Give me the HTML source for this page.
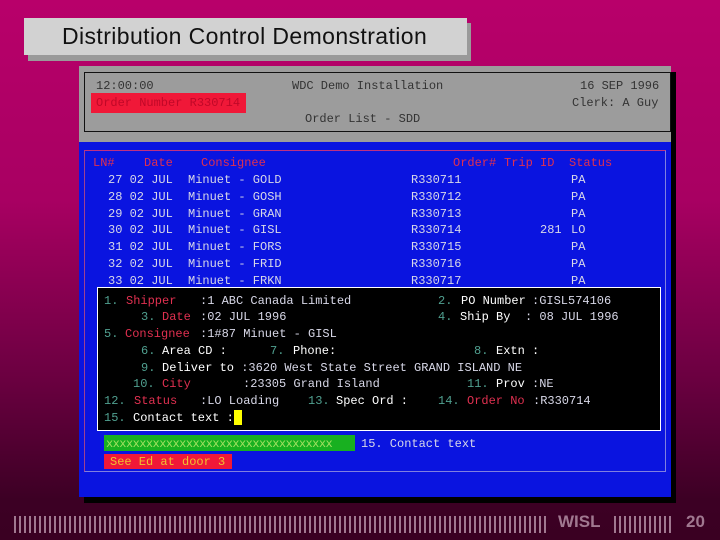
<!DOCTYPE html>
<html><head><meta charset="utf-8"><style>
*{margin:0;padding:0}
body{width:720px;height:540px;overflow:hidden;position:relative;background:linear-gradient(to bottom,#b8006a 0px,#a80062 200px,#6a0040 380px,#3c0024 500px,#3a0022 540px);font-family:"Liberation Mono",monospace}
.a{position:absolute;white-space:pre;font-size:12px;line-height:14px}
.w{color:#d8d8e8}.r{color:#e03050}.g{color:#50a090}.k{color:#333}.W{color:#fff}
</style></head><body>
<div style="position:absolute;left:28px;top:23px;width:443px;height:38px;background:#9a9a9a"></div>
<div style="position:absolute;left:24px;top:18px;width:443px;height:37px;background:#d2d2d2;font-family:'Liberation Sans',sans-serif;font-size:23px;letter-spacing:0.4px;line-height:37px;color:#111;text-indent:38px;white-space:nowrap">Distribution Control Demonstration</div>

<div style="position:absolute;left:84px;top:72px;width:592px;height:431px;background:#000"></div>
<div style="position:absolute;left:79px;top:66px;width:592px;height:76px;background:#9c9c9c"></div>
<div style="position:absolute;left:84px;top:72px;width:585px;height:58px;border:1px solid #111"></div>
<div style="position:absolute;left:79px;top:142px;width:592px;height:355px;background:#0a14e0"></div>
<div style="position:absolute;left:84px;top:150px;width:580px;height:320px;border:1px solid #8080e0;border-top-color:#c03080;border-left-color:#a04090"></div>

<div class="a k" style="left:96px;top:79px">12:00:00</div>
<div class="a k" style="left:292px;top:79px">WDC Demo Installation</div>
<div class="a k" style="left:580px;top:79px">16 SEP 1996</div>
<div style="position:absolute;left:91px;top:93px;width:155px;height:20px;background:#f01838"></div>
<div class="a" style="left:96px;top:96px;color:#c00828">Order Number R330714</div>
<div class="a k" style="left:572px;top:96px">Clerk: A Guy</div>
<div class="a k" style="left:305px;top:112px">Order List - SDD</div>

<div class="a r" style="left:93px;top:156px">LN#</div>
<div class="a r" style="left:144px;top:156px">Date</div>
<div class="a r" style="left:201px;top:156px">Consignee</div>
<div class="a r" style="left:453px;top:156px">Order#</div>
<div class="a r" style="left:504px;top:156px">Trip ID</div>
<div class="a r" style="left:569px;top:156px">Status</div>

<div class="a w" style="left:108px;top:173px">27 02 JUL</div><div class="a w" style="left:188px;top:173px">Minuet - GOLD</div><div class="a w" style="left:411px;top:173px">R330711</div><div class="a w" style="left:571px;top:173px">PA</div>
<div class="a w" style="left:108px;top:190px">28 02 JUL</div><div class="a w" style="left:188px;top:190px">Minuet - GOSH</div><div class="a w" style="left:411px;top:190px">R330712</div><div class="a w" style="left:571px;top:190px">PA</div>
<div class="a w" style="left:108px;top:207px">29 02 JUL</div><div class="a w" style="left:188px;top:207px">Minuet - GRAN</div><div class="a w" style="left:411px;top:207px">R330713</div><div class="a w" style="left:571px;top:207px">PA</div>
<div class="a w" style="left:108px;top:223px">30 02 JUL</div><div class="a w" style="left:188px;top:223px">Minuet - GISL</div><div class="a w" style="left:411px;top:223px">R330714</div><div class="a w" style="left:540px;top:223px">281</div><div class="a w" style="left:571px;top:223px">LO</div>
<div class="a w" style="left:108px;top:240px">31 02 JUL</div><div class="a w" style="left:188px;top:240px">Minuet - FORS</div><div class="a w" style="left:411px;top:240px">R330715</div><div class="a w" style="left:571px;top:240px">PA</div>
<div class="a w" style="left:108px;top:257px">32 02 JUL</div><div class="a w" style="left:188px;top:257px">Minuet - FRID</div><div class="a w" style="left:411px;top:257px">R330716</div><div class="a w" style="left:571px;top:257px">PA</div>
<div class="a w" style="left:108px;top:274px">33 02 JUL</div><div class="a w" style="left:188px;top:274px">Minuet - FRKN</div><div class="a w" style="left:411px;top:274px">R330717</div><div class="a w" style="left:571px;top:274px">PA</div>

<div style="position:absolute;left:97px;top:287px;width:562px;height:142px;background:#000;border:1px solid #fff"></div>
<div class="a g" style="left:104px;top:294px">1.</div><div class="a r" style="left:126px;top:294px">Shipper</div><div class="a w" style="left:200px;top:294px">:1 ABC Canada Limited</div>
<div class="a g" style="left:438px;top:294px">2.</div><div class="a W" style="left:461px;top:294px">PO Number</div><div class="a w" style="left:532px;top:294px">:GISL574106</div>
<div class="a g" style="left:141px;top:310px">3.</div><div class="a r" style="left:162px;top:310px">Date</div><div class="a w" style="left:200px;top:310px">:02 JUL 1996</div>
<div class="a g" style="left:438px;top:310px">4.</div><div class="a W" style="left:460px;top:310px">Ship By</div><div class="a w" style="left:525px;top:310px">: 08 JUL 1996</div>
<div class="a g" style="left:104px;top:327px">5.</div><div class="a r" style="left:125px;top:327px">Consignee</div><div class="a w" style="left:200px;top:327px">:1#87 Minuet - GISL</div>
<div class="a g" style="left:141px;top:344px">6.</div><div class="a W" style="left:162px;top:344px">Area CD :</div>
<div class="a g" style="left:270px;top:344px">7.</div><div class="a W" style="left:293px;top:344px">Phone:</div>
<div class="a g" style="left:474px;top:344px">8.</div><div class="a W" style="left:496px;top:344px">Extn :</div>
<div class="a g" style="left:141px;top:361px">9.</div><div class="a" style="left:162px;top:361px"><span class="W">Deliver to </span><span class="w">:3620 West State Street GRAND ISLAND NE</span></div>
<div class="a g" style="left:133px;top:377px">10.</div><div class="a r" style="left:162px;top:377px">City</div><div class="a w" style="left:243px;top:377px">:23305 Grand Island</div>
<div class="a g" style="left:467px;top:377px">11.</div><div class="a" style="left:496px;top:377px"><span class="W">Prov </span><span class="w">:NE</span></div>
<div class="a g" style="left:104px;top:394px">12.</div><div class="a r" style="left:134px;top:394px">Status</div><div class="a w" style="left:200px;top:394px">:LO Loading</div>
<div class="a g" style="left:308px;top:394px">13.</div><div class="a W" style="left:336px;top:394px">Spec Ord :</div>
<div class="a g" style="left:438px;top:394px">14.</div><div class="a r" style="left:467px;top:394px">Order No</div><div class="a w" style="left:533px;top:394px">:R330714</div>
<div class="a g" style="left:104px;top:411px">15.</div><div class="a W" style="left:133px;top:411px">Contact text :</div>
<div style="position:absolute;left:234px;top:410px;width:8px;height:15px;background:#ffff00"></div>

<div style="position:absolute;left:104px;top:435px;width:251px;height:16px;background:#18b020"></div>
<div class="a" style="left:106px;top:437px;color:#a0e060;letter-spacing:-0.55px">xxxxxxxxxxxxxxxxxxxxxxxxxxxxxxxxxx</div>
<div class="a w" style="left:361px;top:437px">15. Contact text</div>
<div style="position:absolute;left:104px;top:454px;width:128px;height:15px;background:#f01838"></div>
<div class="a" style="left:110px;top:455px;color:#f0c030">See Ed at door 3</div>

<div style="position:absolute;left:14px;top:516px;width:534px;height:17px;background:repeating-linear-gradient(to right,#a07890 0 2px,transparent 2px 5px)"></div>
<div style="position:absolute;left:558px;top:512px;font-family:'Liberation Sans',sans-serif;font-weight:bold;font-size:17px;color:#a07890">WISL</div>
<div style="position:absolute;left:614px;top:516px;width:60px;height:17px;background:repeating-linear-gradient(to right,#a07890 0 2px,transparent 2px 5px)"></div>
<div style="position:absolute;left:686px;top:512px;font-family:'Liberation Sans',sans-serif;font-weight:bold;font-size:17px;color:#a07890">20</div>
</body></html>
